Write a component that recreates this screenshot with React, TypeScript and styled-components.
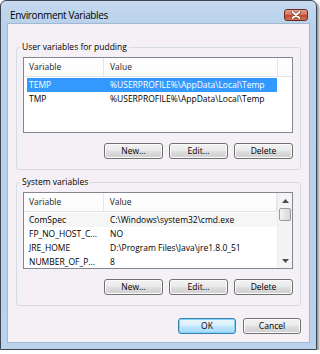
import React from "react";
import styled, { createGlobalStyle } from "styled-components";

type Item = { name: string; value: string };

const userVars: Item[] = [
  { name: "TEMP", value: "%USERPROFILE%\\AppData\\Local\\Temp" },
  { name: "TMP", value: "%USERPROFILE%\\AppData\\Local\\Temp" },
];

// names shown as the list view truncates them
const systemVars: Item[] = [
  { name: "ComSpec", value: "C:\\Windows\\system32\\cmd.exe" },
  { name: "FP_NO_HOST_C...", value: "NO" },
  { name: "JRE_HOME", value: "D:\\Program Files\\Java\\jre1.8.0_51" },
  { name: "NUMBER_OF_P...", value: "8" },
];

const GlobalStyle = createGlobalStyle`
  html, body {
    margin: 0;
    background: #ffffff;
  }
  body {
    font-family: "Open Sans", "Noto Sans", "Liberation Sans", sans-serif;
    color: #000;
  }
`;

const Window = styled.div`
  box-sizing: border-box;
  width: 317px;
  height: 350px;
  border: 1px solid #3c4654;
  border-radius: 6px 6px 0 0;
  background: linear-gradient(#c6d9ef 0px, #b9d1ea 24px, #bad2eb 100%);
  box-shadow: 2px 2px 3px rgba(0, 0, 0, 0.45);
  display: flex;
  flex-direction: column;
`;

const TitleBar = styled.div`
  box-sizing: border-box;
  height: 22px;
  padding: 5px 8px 0 9px;
  display: flex;
  align-items: center;
  justify-content: space-between;
`;

const Title = styled.span`
  font-size: 10px;
  line-height: 14px;
  letter-spacing: -0.35px;
  color: #000;
`;

const CloseButton = styled.div`
  box-sizing: border-box;
  width: 24px;
  height: 12px;
  border: 1px solid #6b2a20;
  border-radius: 3px;
  background: linear-gradient(#e7a191 0%, #d3735d 45%, #c24b30 55%, #d07358 100%);
  display: flex;
  align-items: center;
  justify-content: center;
`;

const Client = styled.div`
  flex: 1;
  margin: 0 6px 6px 6px;
  border: 1px solid #a3b8d2;
  background: #f5f0f5;
  display: flex;
  flex-direction: column;
  padding: 0 8px 8px 8px;
`;

const Group = styled.fieldset<{ $top: number }>`
  margin: ${(p) => p.$top}px 0 0 0;
  padding: 4px 7px 10px 6px;
  border: 1px solid #d6dce3;
  border-radius: 3px;
  min-width: 0;
  display: flex;
  flex-direction: column;
`;

const Caption = styled.legend`
  font-size: 8.5px;
  line-height: 12px;
  padding: 0 2px;
  margin-left: -3px;
  color: #000;
`;

const List = styled.div<{ $height: number }>`
  box-sizing: border-box;
  height: ${(p) => p.$height}px;
  border: 1px solid #828790;
  background: #ffffff;
  display: flex;
  overflow: hidden;
`;

const ListBody = styled.div`
  flex: 1;
  display: flex;
  flex-direction: column;
  min-width: 0;
`;

const Header = styled.div`
  height: 18px;
  flex: none;
  display: flex;
  border-bottom: 1px solid #e5e5e5;
  background: linear-gradient(#ffffff, #fbfbfc);
  margin-bottom: 1px;
`;

const HeaderCell = styled.div<{ $w: number; $pad: number }>`
  box-sizing: border-box;
  width: ${(p) => p.$w}px;
  padding-left: ${(p) => p.$pad}px;
  border-right: 1px solid #e3e6ea;
  font-size: 8.5px;
  line-height: 18px;
  color: #1e1e1e;
`;

const Row = styled.div<{ $selected?: boolean; $focused?: boolean }>`
  flex: none;
  height: 14px;
  width: 250px;
  margin-left: 3px;
  display: grid;
  grid-template-columns: 77px 173px;
  background: ${(p) => (p.$selected ? "#3399ff" : p.$focused ? "#f6f6f6" : "transparent")};
  color: ${(p) => (p.$selected ? "#ffffff" : "#000000")};
`;

const Cell = styled.div<{ $pad: number }>`
  padding-left: ${(p) => p.$pad}px;
  padding-right: 2px;
  font-size: 8.5px;
  line-height: 14px;
  white-space: nowrap;
  overflow: hidden;
  text-overflow: ellipsis;
`;

const ScrollBar = styled.div`
  width: 14px;
  flex: none;
  background: #f4f4f4;
  border-left: 1px solid #ececec;
  display: flex;
  flex-direction: column;
  align-items: center;
`;

const ScrollArrow = styled.div`
  height: 15px;
  display: flex;
  align-items: center;
  justify-content: center;
  width: 100%;
`;

const Thumb = styled.div`
  box-sizing: border-box;
  width: 12px;
  height: 13px;
  border: 1px solid #9a9a9a;
  border-radius: 2px;
  background: linear-gradient(90deg, #f3f3f3, #e4e4e4 50%, #d8d8d8);
`;

const Track = styled.div`
  flex: 1;
`;

const ButtonRow = styled.div<{ $top: number; $gap: number }>`
  display: flex;
  justify-content: flex-end;
  gap: ${(p) => p.$gap}px;
  margin-top: ${(p) => p.$top}px;
`;

const Button = styled.div<{ $default?: boolean; $w?: number }>`
  box-sizing: border-box;
  width: ${(p) => p.$w ?? 59}px;
  height: 16px;
  border: 1px solid ${(p) => (p.$default ? "#3c7fb1" : "#707070")};
  border-radius: 3px;
  background: ${(p) =>
    p.$default
      ? "linear-gradient(#eaf6fd 0%, #d9f0fc 45%, #bee6fd 55%, #a7d9f5 100%)"
      : "linear-gradient(#f2f2f2 0%, #ebebeb 45%, #dddddd 55%, #cfcfcf 100%)"};
  box-shadow: inset 0 0 0 1px ${(p) => (p.$default ? "#7fd3f6" : "#fcfcfc")};
  font-size: 8.5px;
  line-height: 14px;
  text-align: center;
  color: #000;
`;

const Arrow = ({ up }: { up?: boolean }) => (
  <svg width="7" height="4" viewBox="0 0 7 4">
    <path d={up ? "M0 4 L3.5 0 L7 4 Z" : "M0 0 L3.5 4 L7 0 Z"} fill="#4d4d4d" />
  </svg>
);

const VarList = ({
  items,
  height,
  selected,
  focused,
  scroll,
}: {
  items: Item[];
  height: number;
  selected?: number;
  focused?: number;
  scroll?: boolean;
}) => (
  <List $height={height}>
    <ListBody>
      <Header>
        <HeaderCell $w={80} $pad={5}>
          Variable
        </HeaderCell>
        <HeaderCell $w={174} $pad={6}>
          Value
        </HeaderCell>
      </Header>
      {items.map((it, i) => (
        <Row key={it.name} $selected={i === selected} $focused={i === focused}>
          <Cell $pad={2}>{it.name}</Cell>
          <Cell $pad={6}>{it.value}</Cell>
        </Row>
      ))}
    </ListBody>
    {scroll && (
      <ScrollBar>
        <ScrollArrow>
          <Arrow up />
        </ScrollArrow>
        <Thumb />
        <Track />
        <ScrollArrow>
          <Arrow />
        </ScrollArrow>
      </ScrollBar>
    )}
  </List>
);

const EditButtons = () => (
  <ButtonRow $top={10} $gap={6}>
    <Button>New...</Button>
    <Button>Edit...</Button>
    <Button>Delete</Button>
  </ButtonRow>
);

export default function App() {
  return (
    <>
      <GlobalStyle />
      <Window>
        <TitleBar>
          <Title>Environment Variables</Title>
          <CloseButton>
            <svg width="10" height="8" viewBox="0 0 10 8">
              <path
                d="M1.5 1 L8.5 7 M8.5 1 L1.5 7"
                stroke="#7a3a30"
                strokeWidth="3.2"
                strokeLinecap="round"
              />
              <path
                d="M1.5 1 L8.5 7 M8.5 1 L1.5 7"
                stroke="#ffffff"
                strokeWidth="1.8"
                strokeLinecap="round"
              />
            </svg>
          </CloseButton>
        </TitleBar>
        <Client>
          <Group $top={17}>
            <Caption>User variables for pudding</Caption>
            <VarList items={userVars} height={76} selected={0} />
            <EditButtons />
          </Group>
          <Group $top={6}>
            <Caption>System variables</Caption>
            <VarList items={systemVars} height={77} focused={0} scroll />
            <EditButtons />
          </Group>
          <ButtonRow $top={12} $gap={7}>
            <Button $default $w={58}>
              OK
            </Button>
            <Button $w={58}>Cancel</Button>
          </ButtonRow>
        </Client>
      </Window>
    </>
  );
}
